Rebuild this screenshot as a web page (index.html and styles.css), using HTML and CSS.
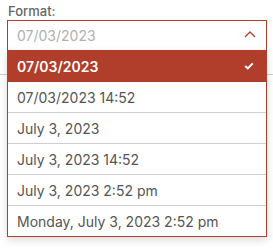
FILE: index.html
```html
<!DOCTYPE html>
<html lang="en">
<head>
  <meta charset="UTF-8">
  <meta name="viewport" content="width=device-width, initial-scale=1.0">
  <title>Format</title>
  <link rel="stylesheet" href="styles.css">
</head>
<body>
  <div class="container">
    <label class="field-label">Format:</label>
    <div class="select">
      <div class="control">
        <span class="placeholder">07/03/2023</span>
        <svg class="chevron" width="12" height="7" viewBox="0 0 12 7">
          <path d="M1 6 L6 1 L11 6" fill="none" stroke="#b13d2b" stroke-width="1.3"/>
        </svg>
      </div>
      <ul class="menu">
        <li class="option selected">
          07/03/2023
          <svg class="check" width="10" height="8" viewBox="0 0 10 8">
            <path d="M1.2 4 L3.8 6.4 L8.8 1.4" fill="none" stroke="#fff" stroke-width="2"/>
          </svg>
        </li>
        <li class="option">07/03/2023 14:52</li>
        <li class="option">July 3, 2023</li>
        <li class="option">July 3, 2023 14:52</li>
        <li class="option">July 3, 2023 2:52 pm</li>
        <li class="option">Monday, July 3, 2023 2:52 pm</li>
      </ul>
    </div>
    <div class="divider"></div>
  </div>
</body>
</html>
```

FILE: styles.css
```css
html, body {
  height: 100%;
}
body {
  font-family: Inter, "Noto Sans", sans-serif;
  background-color: #fff;
  margin: 0;
  padding: 0;
}
.container {
  padding-top: 3px;
  min-height: 250px;
  box-sizing: border-box;
}
.field-label {
  display: block;
  margin-left: 8px;
  font-size: 13px;
  font-weight: 500;
  line-height: 16px;
  color: #666;
  margin-bottom: 1px;
}
.select {
  position: relative;
  margin-left: 7px;
  width: 260px;
}
.control {
  display: flex;
  align-items: center;
  justify-content: space-between;
  height: 31px;
  box-sizing: border-box;
  border: 1px solid #b13d2b;
  padding: 0 10px 0 9px;
}
.placeholder {
  font-size: 14px;
  color: #b0b0b0;
}
.chevron {
  margin-top: -2px;
}
.menu {
  position: absolute;
  top: 30px;
  left: 0;
  right: 0;
  margin: 0;
  padding: 0;
  list-style: none;
  background: #fff;
  border: 1px solid #b13d2b;
  box-shadow: 0 3px 8px rgba(0, 0, 0, 0.15);
  z-index: 2;
}
.option {
  display: flex;
  align-items: center;
  justify-content: space-between;
  height: 30px;
  padding: 0 12px 0 9px;
  font-size: 14px;
  color: #555;
  border-bottom: 1px solid #cfcfcf;
}
.option:last-child {
  border-bottom: none;
}
.option.selected {
  background-color: #b13d2b;
  border-bottom-color: #b13d2b;
  color: #fff;
  font-weight: 600;
}
.divider {
  margin-top: 23px;
  border-top: 1px solid #cfcfcf;
}
```
